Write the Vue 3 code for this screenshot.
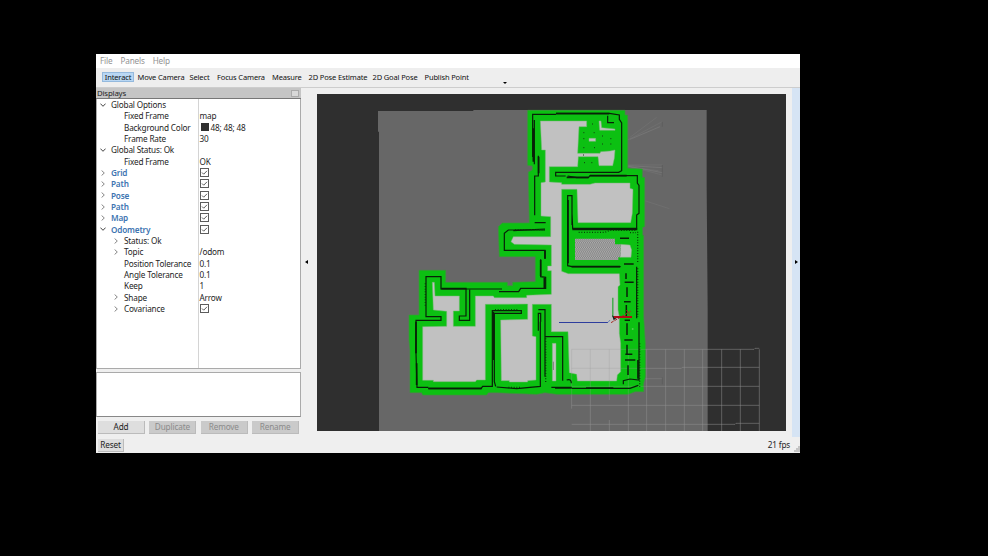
<script setup>
const menus = ['File', 'Panels', 'Help']
const tools = ['Interact', 'Move Camera', 'Select', 'Focus Camera', 'Measure', '2D Pose Estimate', '2D Goal Pose', 'Publish Point']
const rows = [
  { label: 'Global Options', level: 0, arrow: 'open' },
  { label: 'Fixed Frame', level: 1, value: 'map' },
  { label: 'Background Color', level: 1, value: '48; 48; 48', swatch: true },
  { label: 'Frame Rate', level: 1, value: '30' },
  { label: 'Global Status: Ok', level: 0, arrow: 'open' },
  { label: 'Fixed Frame', level: 1, value: 'OK' },
  { label: 'Grid', level: 0, arrow: 'closed', display: true, check: true },
  { label: 'Path', level: 0, arrow: 'closed', display: true, check: true },
  { label: 'Pose', level: 0, arrow: 'closed', display: true, check: true },
  { label: 'Path', level: 0, arrow: 'closed', display: true, check: true },
  { label: 'Map', level: 0, arrow: 'closed', display: true, check: true },
  { label: 'Odometry', level: 0, arrow: 'open', display: true, check: true },
  { label: 'Status: Ok', level: 1, arrow: 'closed' },
  { label: 'Topic', level: 1, arrow: 'closed', value: '/odom' },
  { label: 'Position Tolerance', level: 1, value: '0.1' },
  { label: 'Angle Tolerance', level: 1, value: '0.1' },
  { label: 'Keep', level: 1, value: '1' },
  { label: 'Shape', level: 1, arrow: 'closed', value: 'Arrow' },
  { label: 'Covariance', level: 1, arrow: 'closed', check: true },
]
const actions = ['Add', 'Duplicate', 'Remove', 'Rename']
const gridX = [1040, 1097, 1153, 1208, 1265, 1321, 1378]
</script>

<template>
  <div class="screen">
    <div class="window">
      <nav class="menubar"><span v-for="m in menus" :key="m">{{ m }}</span></nav>
      <div class="toolbar">
        <span v-for="(t, i) in tools" :key="t" class="tool" :class="{ active: i === 0 }">{{ t }}</span>
        <svg class="more" viewBox="0 0 4 2"><path d="M0 0H4L2 2Z" /></svg>
      </div>
      <div class="main">
        <aside class="panel">
          <div class="title"><span>Displays</span><i class="float"></i></div>
          <div class="tree">
            <div v-for="(r, i) in rows" :key="i" class="row">
              <div class="name" :class="['level' + r.level, { display: r.display }]">
                <svg class="chevron" :class="r.arrow" viewBox="0 0 6 6">
                  <path v-if="r.arrow === 'open'" d="M.4 1.6L3 4.300L5.600 1.600" />
                  <path v-else-if="r.arrow === 'closed'" d="M1.600 .5L4.300 3L1.600 5.500" />
                </svg>
                <span>{{ r.label }}</span>
              </div>
              <div class="value">
                <i v-if="r.swatch" class="swatch"></i>
                <svg v-if="r.check" class="check" viewBox="0 0 9 9"><rect x=".5" y=".5" width="8" height="8" /><path d="M2 4.5L3.7 6.2L7 2.8" /></svg>
                <span v-if="r.value">{{ r.value }}</span>
              </div>
            </div>
          </div>
          <div class="description"></div>
          <div class="actions">
            <button v-for="(a, i) in actions" :key="a" :disabled="i > 0">{{ a }}</button>
          </div>
        </aside>
        <div class="handle"><svg viewBox="0 0 3 4"><path d="M3 0V4L0 2Z" /></svg></div>
        <svg class="view" viewBox="51 132 1407 1011" preserveAspectRatio="none">
          <defs>
            <pattern id="stairs" width="12" height="9" patternUnits="userSpaceOnUse" patternTransform="skewX(12)">
              <rect width="12" height="9" fill="#c4c4c4" />
              <path d="M0 0L6 9M6 0L12 9M-6 0L0 9M12 0L18 9" stroke="#5e5e5e" stroke-width="2.2" />
            </pattern>
          </defs>
          <rect x="51" y="132" width="1407" height="1011" fill="#2f2f2f" />
          <path d="M234 183H520V180H1220V410L1223 780V1143H237V245H234Z" fill="#676767" />
          <g fill="none" stroke="#727272" stroke-width="2">
            <path d="M983 270L1087 215M990 262L1070 202M983 345L1087 345M983 348L1087 375M983 350L1075 362M1034 452L1108 476" />
            <path d="M985 347L1087 353M985 349L1087 368M1036 986H1087M990 268L1080 230" stroke="#7b7b7b" />
            <path d="M1087 215V230M1087 345V380M1087 982V1003" stroke="#5b5b5b" />
          </g>
          <path class="inflated" d="M683 181H975V195H983V355L1027 357V382H1034V530L1028 532V556H1031V800L1036 880V980L1031 1000V1025H1005L985 1033H770L735 1028L710 1033L590 1028H565L560 1035H368L365 1028H330V900L327 870V795H357V661H437V697H622V707H638V697L706 695V620H598L595 530L607 519H688L685 366L697 360V348L683 346Z" />
          <path class="free" d="M721 213H860V230H837L833 310H900L902 305L930 303L945 300L943 325L938 347H897L894 320H835L833 350H748V396L785 398V403H870L885 399H990V415L999 418L997 490L992 518H834L831 418H785V664L805 671H958L960 705L954 710V780L958 800V850L962 880V965L952 975L950 993H832L830 973L808 968L804 845H754V763H697V858L708 860V990L683 992V996H628V992H604L602 810L683 808V762L556 763V990H530L526 995H400V991H368V830L440 829V784L400 780L397 697H403L405 738H478V783H460V829H526V738H580L583 743H680V736L754 733V662H743V648H754V585L643 583L633 575L640 560H752V500L723 498V398L736 396V300H725Z" />
          <path class="free" d="M962 583L990 585L995 600L993 622H960ZM757 880H768V993H757ZM867 265H887V274H867ZM897 213H903L905 233L945 237V241H899Z" />
          <path d="M825 566H945V583H962V622H955V630H825Z" fill="url(#stairs)" />
          <g class="grid">
            <path d="M815 1036V1076M871 1036V1143M985 1036V1143M928 1110V1143" />
            <path v-for="x in gridX" :key="x" :d="`M${x} 898V1143`" />
            <path d="M1036 898H1362L1365 895H1378M1036 955H1144L1147 952H1378M1036 1009H1378M815 1066H1378M815 1123H1305L1308 1120H1378" />
            <path class="covered" d="M815 898V1036M871 898V1036M928 898V1050M985 898V1036M815 898H1036M815 955H1036M815 1009H1036" />
          </g>
          <g class="wall">
            <path d="M698 321V193H768M768 190H928L958 195V208L965 219V362L956 367H767V378H797M803 378L830 383H865L870 377H1012V399L1017 406V490L1010 495V535H818L816 490M816 525V437H803V647L816 650H962" />
            <path d="M703 210V343M715 317V378H704V496M704 518H737M923 197V218H942M735 540H625L613 550V601H735V626M722 628V680L737 682V715H662L656 725H597M378 795V680H423V717H606M498 717V798H478V811H509V719M378 765V800H423V811H348V910L351 1012H385M385 1016H543L548 1009H577V782H664V790H583V995L587 1009M590 1011L650 1016L721 1009V815M715 842V790H722V815M715 779H735V980M735 860H788V992M754 1012H815M815 1015H990L1015 1006M1017 817V990L990 987L970 992V1003M1010 650V805" />
            <path d="M735 601V626M722 630V678M733 684V715M768 191H928M700 235V335M716 320V370M817 538H1012M804 450V640M815 650H960M800 382H865M870 377H980M385 1015H545M580 785V930M348 815V910M350 940V1005M424 716H500M765 1014H815M858 1014H940M1014 930V986" stroke-width="5" />
            <path d="M978 670V687M974 697H1001M981 712V741M972 755H992M979 765V800M974 811H990M981 820V855M973 870H998M981 884V913M976 913H997M975 930H1006M984 946V975M960 565H987M972 642H1001" stroke-width="4.5" />
            <path d="M800 990Q814 985 814 1000M640 542L735 537" />
          </g>
          <path d="M836 547H915L930 541H1010M1013 545V640M737 865V1000M990 548H1008M1013 655V800M645 539H735M585 779H652M376 700V770M625 1012H660M1019 880V1010" fill="none" stroke="#064006" stroke-width="4" stroke-dasharray="3 5" />
          <path d="M850 248h3M881 248h3M850 266h3M850 293h3M882 293h3M876 222h3M906 258h3M906 282h3M931 266h3M931 282h3M852 338h3M874 338h3M849 315h3" stroke="#123812" stroke-width="3" />
          <path d="M760 935V960" stroke="#7b7b7b" stroke-width="3" />
          <circle cx="998" cy="837" r="3" fill="#50ce50" />
          <path d="M777 817.5H924" stroke="#2d3d9d" stroke-width="3" />
          <path d="M924 817L930 810" stroke="#6b82ba" stroke-width="3" />
          <path d="M938.5 743V800" stroke="#20a52c" stroke-width="3.5" />
          <path d="M933 818L992 784M980 780L989 795" stroke="#a52d25" stroke-width="3" stroke-dasharray="9 3" />
          <path d="M936 796L950 804L941 811Z" fill="#15251f" />
          <path d="M942 801H996" stroke="#b30b16" stroke-width="6" />
        </svg>
        <div class="handle right"><svg viewBox="0 0 3 4"><path d="M0 0V4L3 2Z" /></svg></div>
      </div>
      <footer>
        <button>Reset</button>
        <span class="fps">21 fps</span>
        <svg class="grip" viewBox="0 0 6 6"><path d="M4 0H6V6H0V4H2V2H4Z" /></svg>
      </footer>
    </div>
  </div>
</template>

<style>
body { background: #000; overflow: hidden; }
</style>

<style scoped>
* { box-sizing: border-box; }
.screen { width: 988px; height: 556px; padding: 54px 0 0 96px; background: #000; font-family: "Noto Sans", sans-serif; font-size: 8.2px; letter-spacing: -.17px; color: #242424; }
.window { width: 704px; height: 399px; display: flex; flex-direction: column; background: #efefef; }
.menubar { height: 14px; padding-left: 4px; background: #fff; display: flex; gap: 8px; align-items: center; color: #929292; line-height: 14px; }
.toolbar { height: 20px; border-bottom: 1px solid #cdcdcd; background: #eee; padding: 0 0 2px 6px; display: grid; grid-template-columns: 35.5px 52px 27.5px 55px 36.5px 64px 52px 48px 1fr; align-items: center; font-size: 7.5px; letter-spacing: -.14px; color: #111; white-space: nowrap; }
.tool { line-height: 10px; }
.tool.active { text-align: center; background: #b9d7f3; border: 1px solid #94b9dd; line-height: 8px; height: 10px; width: 32px; }
.more { width: 4px; height: 2px; margin: 13px 0 0 30.5px; }
.main { height: 349px; display: flex; }
.panel { width: 205px; display: flex; flex-direction: column; }
.title { height: 11px; background: #c5c5c5; border-bottom: 1px solid #777; display: flex; justify-content: space-between; align-items: center; padding: 0 2px 0 1px; line-height: 9px; font-size: 7.8px; }
.float { width: 8px; height: 7px; background: #d8d8d8; border: 1px solid #aaa; }
.tree { height: 270px; background: linear-gradient(to right, transparent 101px, #d4d4d4 101px, #d4d4d4 102px, transparent 102px) #fff; border: 1px solid #aaa; border-top: 0; }
.row { height: 11.33px; display: grid; grid-template-columns: 101.5px 1fr; line-height: 11.33px; white-space: nowrap; }
.name { display: flex; align-items: center; gap: 5px; padding-left: 3px; }
.name.level1 { padding-left: 16px; }
.display { color: #3d74b1; font-weight: 600; }
.chevron { width: 6px; height: 6px; fill: none; stroke: #444; stroke-width: 1; flex: none; }
.chevron.closed { stroke: #858585; }
.value { display: flex; align-items: center; gap: 2px; padding-left: 1px; }
.swatch { width: 8px; height: 8px; background: #303030; margin-left: 1px; }
.check { width: 9px; height: 9px; fill: none; stroke: #5c5c5c; stroke-width: 1; }
.description { height: 45px; margin-top: 3px; border: 1px solid #aaa; border-bottom-color: #888; background: #fff; }
.actions { margin-top: 4px; padding-left: 2px; display: flex; gap: 4.4px; }
button { font-family: inherit; font-size: 8.2px; letter-spacing: -.15px; padding: 0; height: 13px; line-height: 12px; width: 47px; color: #222; background: #dedede; border: 1px solid #bbb; border-width: 0 1px 1px 0; }
button:disabled { color: #8b8b8b; background: #cacaca; }
.handle { width: 16px; display: flex; justify-content: center; padding: 172px 5px 0 0; }
.handle svg { width: 3px; height: 4px; flex: none; }
.view { width: 469px; height: 337px; margin-top: 6px; flex: none; display: block; }
.handle.right { width: 8px; margin-left: 6px; padding-right: 0; background: #d6e4f4; }
footer { height: 16px; padding: 2px 0 0 2px; display: flex; }
footer button { width: 26px; }
.fps { margin-left: auto; margin-right: 4px; line-height: 11px; }
.grip { width: 6px; height: 6px; margin-top: 7px; fill: #c4c4c4; }
.inflated { fill: #0cc012; stroke: #3a983a; stroke-width: 2; }
.free { fill: #c1c1c1; stroke: #75b975; stroke-width: 1.5; }
.grid { fill: none; stroke: #929292; stroke-opacity: .6; stroke-width: 2.5; }
.covered { stroke: #9a9a9a; stroke-opacity: .35; }
.wall { fill: none; stroke: #082008; stroke-width: 3.6; }
</style>
